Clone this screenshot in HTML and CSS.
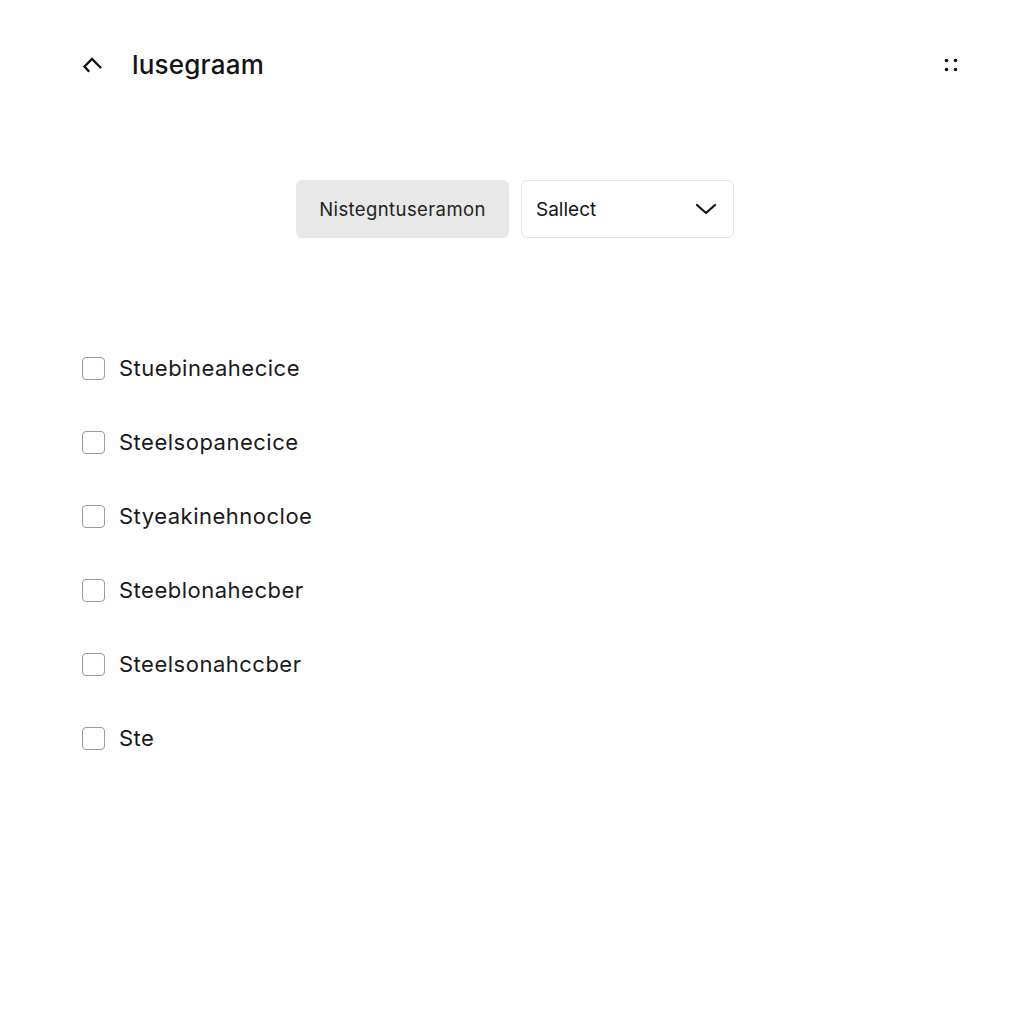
FILE: index.html
```html
<!DOCTYPE html>
<html>
<head>
<meta charset="utf-8">
<link rel="stylesheet" href="styles.css">
</head>
<body>
<div class="page">
  <header class="header">
    <div class="left">
      <svg class="back" width="22" height="18" viewBox="0 0 22 18"><path d="M6.5 15 L2.5 10.5 L10 3 L18.5 11.5" fill="none" stroke="#111" stroke-width="2.4" stroke-linecap="round" stroke-linejoin="miter"/></svg>
      <h1 class="title">lusegraam</h1>
    </div>
    <svg class="dots" width="14" height="14" viewBox="0 0 14 14"><circle cx="2.5" cy="2.5" r="1.8" fill="#111"/><circle cx="11.5" cy="2.5" r="1.8" fill="#111"/><circle cx="2.5" cy="11.5" r="1.8" fill="#111"/><circle cx="11.5" cy="11.5" r="1.8" fill="#111"/></svg>
  </header>
  <div class="controls">
    <button class="btn">Nistegntuseramon</button>
    <div class="select">
      <span>Sallect</span>
      <svg width="22" height="14" viewBox="0 0 22 14"><path d="M2 3 L11 11 L20 3" fill="none" stroke="#111" stroke-width="2.2" stroke-linecap="round" stroke-linejoin="round"/></svg>
    </div>
  </div>
  <ul class="list">
    <li><span class="box"></span>Stuebineahecice</li>
    <li><span class="box"></span>Steelsopanecice</li>
    <li><span class="box"></span>Styeakinehnocloe</li>
    <li><span class="box"></span>Steeblonahecber</li>
    <li><span class="box"></span>Steelsonahccber</li>
    <li><span class="box"></span>Ste</li>
  </ul>
</div>
</body>
</html>
```
FILE: styles.css
```css
html, body { margin: 0; padding: 0; background: #fefefe; }
body { font-family: "Inter", "Lato", sans-serif; color: #151515; }
.page { width: 1024px; height: 1024px; box-sizing: border-box; }
.header { display: flex; align-items: center; justify-content: space-between; padding: 50px 66px 0 82px; height: 30px; }
.left { display: flex; align-items: center; }
.back { margin-right: 28px; margin-top: 0; }
.title { margin: 0; font-size: 26px; font-weight: 500; letter-spacing: 0.2px; line-height: 30px; }
.dots { margin-top: 0; }
.controls { display: flex; justify-content: center; gap: 12px; margin-top: 100px; padding-left: 6px; }
.btn { width: 213px; height: 58px; background: #e8e8e8; border: none; border-radius: 6px; font-family: inherit; font-size: 18.5px; letter-spacing: 0.4px; color: #222; padding: 0; }
.select { width: 213px; height: 58px; box-sizing: border-box; border: 1px solid #e6e6e6; border-radius: 6px; background: #fff; display: flex; align-items: center; justify-content: space-between; padding: 0 16px 0 14px; font-size: 19px; color: #151515; }
.list { list-style: none; margin: 93px 0 0 82px; padding: 0; }
.list li { display: flex; align-items: center; height: 74px; font-size: 22px; letter-spacing: 0.5px; color: #1a1a1a; }
.box { width: 21px; height: 21px; border: 1.5px solid #9a9a9a; border-radius: 4px; margin-right: 14px; box-sizing: content-box; }
```
